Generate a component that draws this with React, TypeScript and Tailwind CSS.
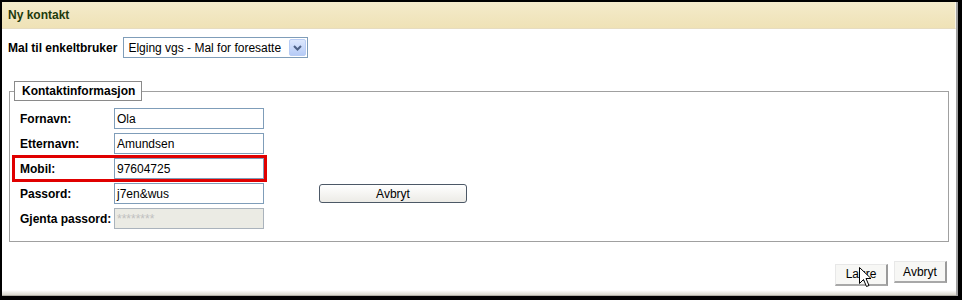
import React from "react";

const font = { fontFamily: '"Liberation Sans", Arial, sans-serif' };

function TextInput({ value, disabled }: { value: string; disabled?: boolean }) {
  return (
    <div
      className={`w-[150px] h-[21px] border flex items-center pl-[2px] text-[12px] ${
        disabled
          ? "bg-[#ebebe4] border-[#aab3bc] text-[#c0c0c0]"
          : "bg-white border-[#7f9db9] text-black"
      }`}
    >
      {value}
    </div>
  );
}

function Row({
  label,
  value,
  disabled,
  children,
}: {
  label: string;
  value: string;
  disabled?: boolean;
  children?: React.ReactNode;
}) {
  return (
    <div className="relative flex items-center h-[21px]">
      <div className="w-[94px] font-bold text-[12px] text-black">{label}</div>
      <TextInput value={value} disabled={disabled} />
      {children}
    </div>
  );
}

export default function App() {
  return (
    <div
      className="w-[962px] h-[300px] bg-black pl-[2px] pt-[2px] pr-[4px] pb-[4px]"
      style={font}
    >
      <div className="h-full w-full bg-white border-r-2 border-r-[#a0a0a0] flex flex-col relative">
        {/* title bar */}
        <div className="h-[27px] shrink-0 flex items-center pl-[6px] bg-gradient-to-b from-[#f4ebcb] to-[#efe2b6] border-b border-[#e6dcc0] border-r border-r-[#f8f4e8]">
          <span className="font-bold text-[12px] text-[#1e3a0c]">Ny kontakt</span>
        </div>

        {/* Mal row */}
        <div className="flex items-center pl-[6px] mt-[8px] h-[21px]">
          <span className="font-bold text-[12px] text-black mr-[6px]">Mal til enkeltbruker</span>
          <div className="w-[185px] h-[21px] border border-[#7f9db9] bg-white flex items-center justify-between pl-[4px] pr-[1px]">
            <span className="text-[12px] text-black">Elging vgs - Mal for foresatte</span>
            <div className="w-[17px] h-[17px] rounded-[2px] bg-gradient-to-b from-[#dde8fd] to-[#b6cbf6] border border-[#b9cdf5] flex items-center justify-center">
              <svg width="9" height="6" viewBox="0 0 9 6">
                <path d="M1 1 L4.5 4.5 L8 1" stroke="#4d6185" strokeWidth="2" fill="none" />
              </svg>
            </div>
          </div>
        </div>

        {/* fieldset */}
        <fieldset className="mt-[23px] mx-[7px] border border-[#a0a0a0] p-0 h-[161px]">
          <legend className="ml-[4px] border border-[#8a8a8a] bg-white h-[20px] w-[128px] pl-[7px] flex items-center font-bold text-[12px] text-black">
            Kontaktinformasjon
          </legend>
          <div className="flex flex-col gap-[4px] mt-[7px] ml-[10px]">
            <Row label="Fornavn:" value="Ola" />
            <Row label="Etternavn:" value="Amundsen" />
            <Row label="Mobil:" value="97604725">
              <div className="absolute left-[-8px] top-[-3px] w-[255px] h-[27px] border-[3px] border-[#e00000] pointer-events-none" />
            </Row>
            <Row label="Passord:" value="j7en&wus">
              <button className="ml-[55px] w-[148px] h-[19px] rounded-[3px] border border-[#4c5866] bg-gradient-to-b from-[#ffffff] to-[#ecebe6] text-[12px] text-black flex items-center justify-center">
                Avbryt
              </button>
            </Row>
            <Row label="Gjenta passord:" value="********" disabled />
          </div>
        </fieldset>

        {/* bottom buttons */}
        <div className="flex justify-end gap-[6px] pr-[9px] mt-[19px]">
          <div className="relative">
            <button className="w-[53px] h-[22px] bg-[#f7f7f5] border-t border-l border-t-[#e8e8e8] border-l-[#e8e8e8] border-r-2 border-b-2 border-r-[#9a9a9a] border-b-[#a8a8a8] text-[12px] text-black">
              Lagre
            </button>
            <svg
              className="absolute left-[24px] top-[6px]"
              width="13"
              height="21"
              viewBox="0 0 13 21"
            >
              <path
                d="M0.5 0.5 L0.5 16.5 L4.5 12.5 L7.5 19.5 L10 18.5 L7 11.5 L12 11.5 Z"
                fill="white"
                stroke="black"
                strokeWidth="1"
              />
            </svg>
          </div>
          <button className="w-[53px] h-[22px] bg-[#f7f7f5] border-t border-l border-t-[#e8e8e8] border-l-[#e8e8e8] border-r-2 border-b-2 border-r-[#9a9a9a] border-b-[#a8a8a8] text-[12px] text-black">
            Avbryt
          </button>
        </div>

        <div className="mt-auto h-[6px] bg-gradient-to-b from-[#ffffff] to-[#d9d6cc] border-b border-[#b0ada4]" />
      </div>
    </div>
  );
}
